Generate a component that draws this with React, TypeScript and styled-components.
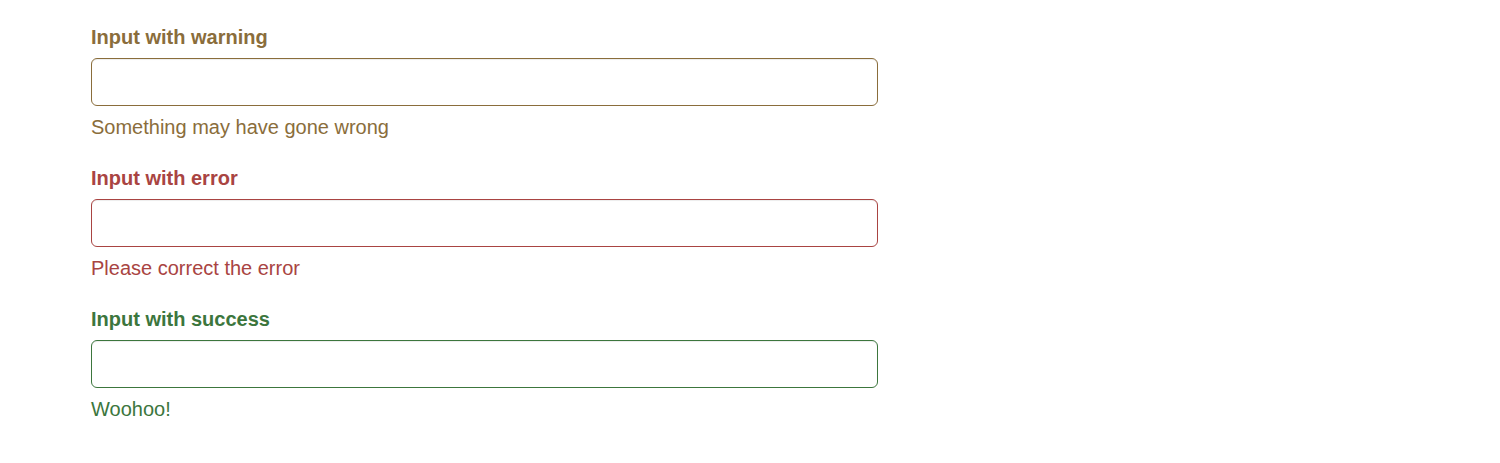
import React from "react";
import styled, { createGlobalStyle } from "styled-components";

const GlobalStyle = createGlobalStyle`
  html, body {
    margin: 0;
    padding: 0;
    background: #ffffff;
  }
  body {
    font-family: "Liberation Sans", Arial, Helvetica, sans-serif;
  }
`;

type Status = "warning" | "error" | "success";

const palette: Record<Status, string> = {
  warning: "#8a6d3b",
  error: "#a94442",
  success: "#3c763d",
};

const Page = styled.div`
  padding: 23px 0 0 91px;
  display: flex;
  flex-direction: column;
`;

const FormGroup = styled.div<{ $status: Status }>`
  display: flex;
  flex-direction: column;
  width: 787px;
  margin-bottom: 23px;
  color: ${(p) => palette[p.$status]};
`;

const Label = styled.label`
  font-size: 20px;
  font-weight: 700;
  line-height: 28px;
  margin-bottom: 7px;
`;

const Input = styled.input<{ $status: Status }>`
  box-sizing: border-box;
  width: 100%;
  height: 48px;
  border: 1px solid ${(p) => palette[p.$status]};
  border-radius: 6px;
  box-shadow: inset 0 1px 1px rgba(0, 0, 0, 0.075);
  background: #fff;
  padding: 8px 16px;
  font-size: 20px;
  font-family: inherit;
  outline: none;
`;

const HelpBlock = styled.span`
  font-size: 20px;
  line-height: 28px;
  margin-top: 7px;
`;

const fields: { status: Status; label: string; help: string }[] = [
  { status: "warning", label: "Input with warning", help: "Something may have gone wrong" },
  { status: "error", label: "Input with error", help: "Please correct the error" },
  { status: "success", label: "Input with success", help: "Woohoo!" },
];

export default function App() {
  return (
    <>
      <GlobalStyle />
      <Page>
        {fields.map((f) => (
          <FormGroup key={f.status} $status={f.status}>
            <Label>{f.label}</Label>
            <Input $status={f.status} type="text" />
            <HelpBlock>{f.help}</HelpBlock>
          </FormGroup>
        ))}
      </Page>
    </>
  );
}
